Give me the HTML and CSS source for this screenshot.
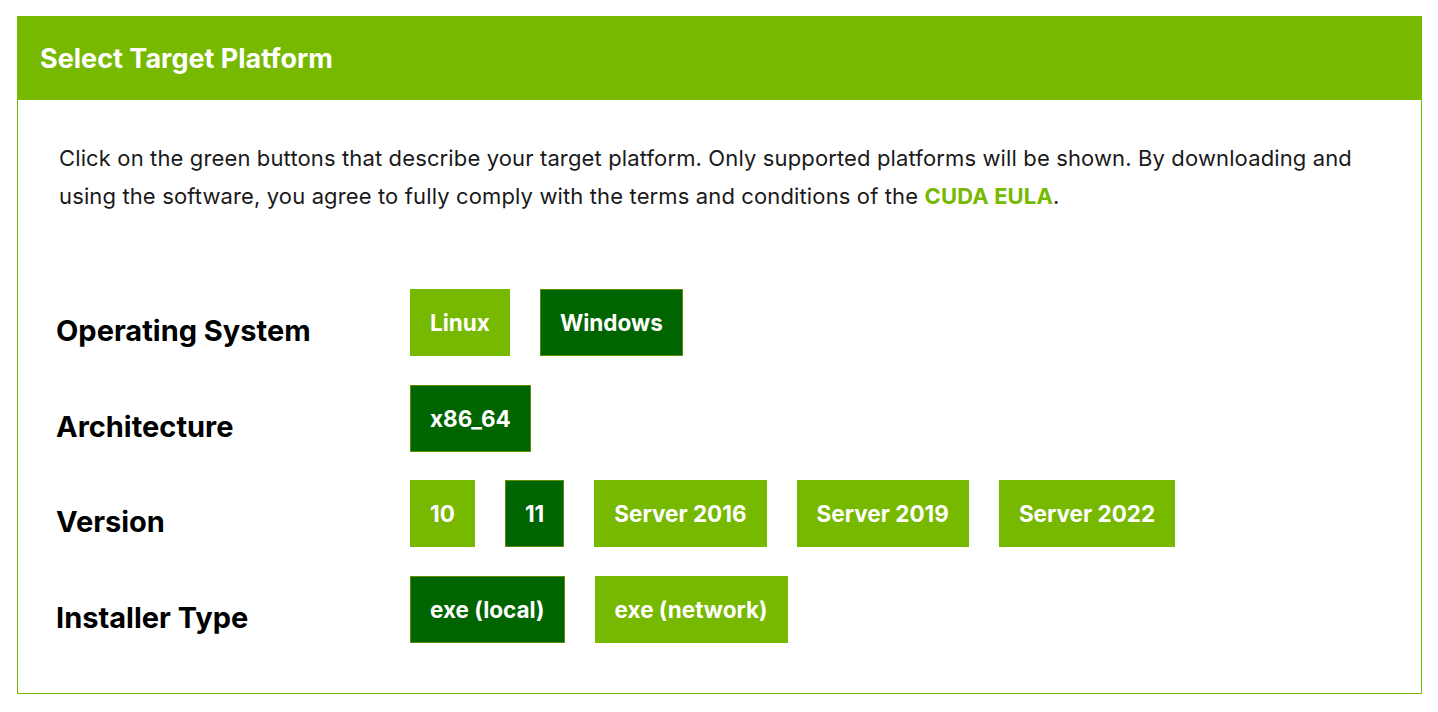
FILE: index.html
```html
<!DOCTYPE html>
<html lang="en">
<head>
<meta charset="utf-8">
<title>Select Target Platform</title>
<link rel="stylesheet" href="styles.css">
</head>
<body>
<div class="page">
  <section class="panel">
    <header class="panel-head">Select Target Platform</header>
    <div class="panel-body">
      <p class="intro">Click on the green buttons that describe your target platform. Only supported platforms will be shown. By downloading and using the software, you agree to fully comply with the terms and conditions of the <a class="eula" href="#">CUDA EULA</a>.</p>
      <div class="rows">
        <div class="row">
          <div class="label">Operating System</div>
          <div class="opts">
            <span class="btn">Linux</span>
            <span class="btn active">Windows</span>
          </div>
        </div>
        <div class="row">
          <div class="label">Architecture</div>
          <div class="opts">
            <span class="btn active">x86_64</span>
          </div>
        </div>
        <div class="row">
          <div class="label">Version</div>
          <div class="opts">
            <span class="btn">10</span>
            <span class="btn active">11</span>
            <span class="btn">Server 2016</span>
            <span class="btn">Server 2019</span>
            <span class="btn">Server 2022</span>
          </div>
        </div>
        <div class="row">
          <div class="label">Installer Type</div>
          <div class="opts">
            <span class="btn active">exe (local)</span>
            <span class="btn">exe (network)</span>
          </div>
        </div>
      </div>
    </div>
  </section>
</div>
</body>
</html>
```

FILE: styles.css
```css
html, body {
  margin: 0;
  padding: 0;
  background: #ffffff;
}
body {
  font-family: Inter, "Noto Sans", "Liberation Sans", sans-serif;
  color: #1a1a1a;
}
.page {
  padding: 16px 16px 0 17px;
}
.panel {
  border-left: 1px solid #76b900;
  border-right: 1px solid #76b900;
  border-bottom: 1px solid #76b900;
  width: 1403px;
}
.panel-head {
  background: #76b900;
  color: #ffffff;
  height: 84px;
  box-sizing: border-box;
  padding-left: 23px;
  display: flex;
  align-items: center;
  font-size: 27px;
  font-weight: 700;
  margin: 0 -1px;
}
.panel-body {
  padding: 39px 40px 50px 41px;
}
.intro {
  margin: 0;
  font-size: 22px;
  line-height: 38px;
  letter-spacing: 0.13px;
  color: #1a1a1a;
  max-width: 1322px;
}
.eula {
  color: #76b900;
  font-weight: 700;
  text-decoration: none;
}
.rows {
  margin-top: 74px;
  display: flex;
  flex-direction: column;
  gap: 28.5px;
}
.row {
  display: flex;
  align-items: flex-start;
}
.label {
  width: 354px;
  flex: none;
  padding-top: 22px;
  font-size: 29px;
  font-weight: 700;
  color: #000000;
  line-height: 40px;
  margin-left: -3px;
}
.opts {
  display: flex;
  gap: 30px;
}
.btn {
  height: 67px;
  box-sizing: border-box;
  padding: 0 19px;
  display: flex;
  align-items: center;
  justify-content: center;
  background: #76b900;
  color: #ffffff;
  font-size: 22.5px;
  font-weight: 700;
  border: 1px solid #76b900;
}
.btn.active {
  background: #006400;
  border-color: #5f8f00;
}
```
